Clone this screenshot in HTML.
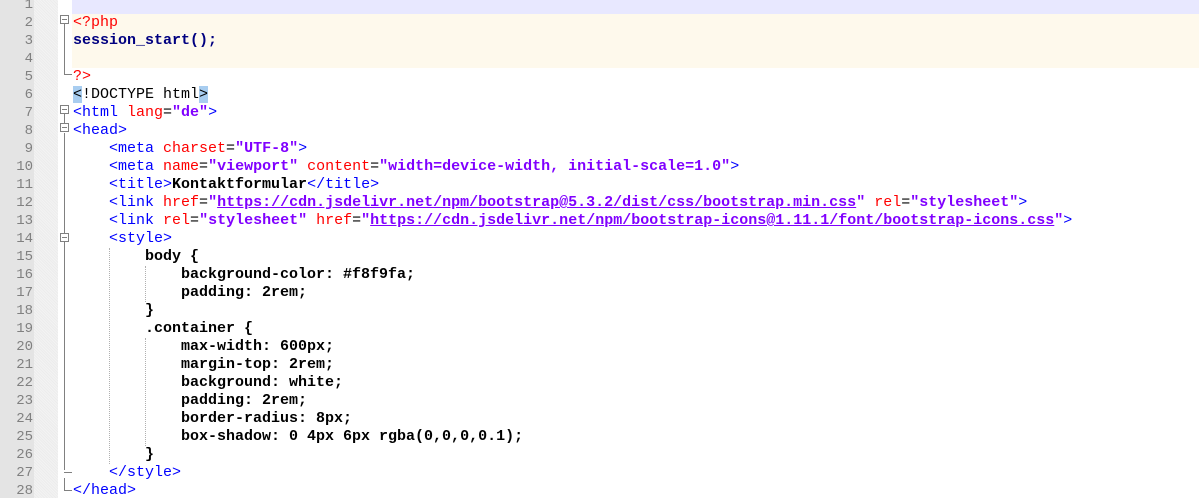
<!DOCTYPE html>
<html><head><style>
body{margin:0;width:1199px;height:498px;overflow:hidden;background:#fff;position:relative;font-family:"Liberation Mono","Courier New",monospace;font-size:15px}
.gut{position:absolute;left:0;top:0;width:34px;height:498px;background:#e4e4e4}
.gut2{position:absolute;left:34px;top:0;width:24px;height:498px;background:#f0f0f0;background-image:repeating-linear-gradient(45deg,#f3f3f3 0 1px,#ececec 1px 2px)}
.fold{position:absolute;left:58px;top:0;width:14px;height:498px;background:#fff}
.row{position:absolute;left:0;height:18px;line-height:18px;width:1199px;white-space:pre}
.num{position:absolute;left:0;width:33px;text-align:right;color:#808080;font-size:14px}
.code{position:absolute;left:73px}
.t{color:#0000ff}.a{color:#ff0000}.v{color:#8000ff;font-weight:bold}.b{font-weight:bold;color:#000}
.u{text-decoration:underline}
.p{color:#ff0000}.s{color:#000080;font-weight:bold}
.box{position:absolute;left:60px;width:9px;height:9px;border:1px solid #808080;background:#fff;box-sizing:border-box}
.box:after{content:"";position:absolute;left:1px;top:3px;width:5px;height:1px;background:#808080}
.vl{position:absolute;left:64px;width:1px;background:#808080}
.hl{position:absolute;left:64px;width:8px;height:1px;background:#808080}
.ig{position:absolute;width:0;border-left:1px dotted #b0b0b0}
</style></head><body>
<div class="gut"></div><div class="gut2"></div><div class="fold"></div>
<div style="position:absolute;left:72px;top:0;width:1127px;height:14px;background:#e8e8ff"></div>
<div style="position:absolute;left:72px;top:14px;width:1127px;height:54px;background:#fef9ec"></div>
<div class="vl" style="top:24px;height:50px"></div><div class="hl" style="top:74px"></div>
<div class="vl" style="top:114px;height:10px"></div>
<div class="vl" style="top:133px;height:100px"></div>
<div class="vl" style="top:242px;height:228px"></div><div class="hl" style="top:472px"></div>
<div class="vl" style="top:478px;height:12px"></div><div class="hl" style="top:490px"></div>
<div class="box" style="top:15px"></div>
<div class="box" style="top:105px"></div>
<div class="box" style="top:123px"></div>
<div class="box" style="top:233px"></div>
<div class="ig" style="left:109px;top:248px;height:216px"></div>
<div class="ig" style="left:145px;top:266px;height:36px"></div>
<div class="ig" style="left:145px;top:338px;height:108px"></div>

<div class="row" style="top:-4px"><span class="num">1</span></div>
<div class="row" style="top:14px"><span class="num">2</span><span class="code"><span class="p">&lt;?php</span></span></div>
<div class="row" style="top:32px"><span class="num">3</span><span class="code"><span class="s">session_start();</span></span></div>
<div class="row" style="top:50px"><span class="num">4</span></div>
<div class="row" style="top:68px"><span class="num">5</span><span class="code"><span class="p">?&gt;</span></span></div>
<div class="row" style="top:86px"><span class="num">6</span><span class="code"><span style="background:#a8cdf0">&lt;</span>!DOCTYPE html<span style="background:#a8cdf0">&gt;</span></span></div>
<div class="row" style="top:104px"><span class="num">7</span><span class="code"><span class="t">&lt;html </span><span class="a">lang</span>=<span class="v">"de"</span><span class="t">&gt;</span></span></div>
<div class="row" style="top:122px"><span class="num">8</span><span class="code"><span class="t">&lt;head&gt;</span></span></div>
<div class="row" style="top:140px"><span class="num">9</span><span class="code">    <span class="t">&lt;meta </span><span class="a">charset</span>=<span class="v">"UTF-8"</span><span class="t">&gt;</span></span></div>
<div class="row" style="top:158px"><span class="num">10</span><span class="code">    <span class="t">&lt;meta </span><span class="a">name</span>=<span class="v">"viewport"</span> <span class="a">content</span>=<span class="v">"width=device-width, initial-scale=1.0"</span><span class="t">&gt;</span></span></div>
<div class="row" style="top:176px"><span class="num">11</span><span class="code">    <span class="t">&lt;title&gt;</span><span class="b">Kontaktformular</span><span class="t">&lt;/title&gt;</span></span></div>
<div class="row" style="top:194px"><span class="num">12</span><span class="code">    <span class="t">&lt;link </span><span class="a">href</span>=<span class="v">"<span class="u">https://cdn.jsdelivr.net/npm/bootstrap@5.3.2/dist/css/bootstrap.min.css</span>"</span> <span class="a">rel</span>=<span class="v">"stylesheet"</span><span class="t">&gt;</span></span></div>
<div class="row" style="top:212px"><span class="num">13</span><span class="code">    <span class="t">&lt;link </span><span class="a">rel</span>=<span class="v">"stylesheet"</span> <span class="a">href</span>=<span class="v">"<span class="u">https://cdn.jsdelivr.net/npm/bootstrap-icons@1.11.1/font/bootstrap-icons.css</span>"</span><span class="t">&gt;</span></span></div>
<div class="row" style="top:230px"><span class="num">14</span><span class="code">    <span class="t">&lt;style&gt;</span></span></div>
<div class="row" style="top:248px"><span class="num">15</span><span class="code b">        body {</span></div>
<div class="row" style="top:266px"><span class="num">16</span><span class="code b">            background-color: #f8f9fa;</span></div>
<div class="row" style="top:284px"><span class="num">17</span><span class="code b">            padding: 2rem;</span></div>
<div class="row" style="top:302px"><span class="num">18</span><span class="code b">        }</span></div>
<div class="row" style="top:320px"><span class="num">19</span><span class="code b">        .container {</span></div>
<div class="row" style="top:338px"><span class="num">20</span><span class="code b">            max-width: 600px;</span></div>
<div class="row" style="top:356px"><span class="num">21</span><span class="code b">            margin-top: 2rem;</span></div>
<div class="row" style="top:374px"><span class="num">22</span><span class="code b">            background: white;</span></div>
<div class="row" style="top:392px"><span class="num">23</span><span class="code b">            padding: 2rem;</span></div>
<div class="row" style="top:410px"><span class="num">24</span><span class="code b">            border-radius: 8px;</span></div>
<div class="row" style="top:428px"><span class="num">25</span><span class="code b">            box-shadow: 0 4px 6px rgba(0,0,0,0.1);</span></div>
<div class="row" style="top:446px"><span class="num">26</span><span class="code b">        }</span></div>
<div class="row" style="top:464px"><span class="num">27</span><span class="code">    <span class="t">&lt;/style&gt;</span></span></div>
<div class="row" style="top:482px"><span class="num">28</span><span class="code"><span class="t">&lt;/head&gt;</span></span></div>
</body></html>
